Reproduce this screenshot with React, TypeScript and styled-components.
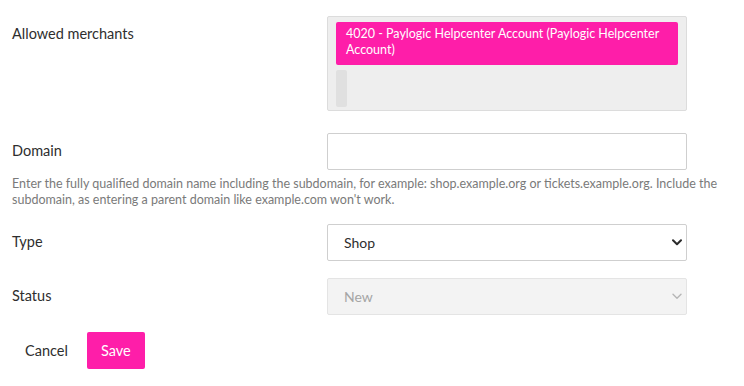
import React from "react";
import styled, { createGlobalStyle } from "styled-components";

const PINK = "#fe1ea9";
const FONT = `"Lato", "Liberation Sans", sans-serif`;

const GlobalStyle = createGlobalStyle`
  body {
    margin: 0;
    background: #ffffff;
    font-family: ${FONT};
    color: #2b2b2b;
  }
`;

const Chevron: React.FC<{ muted?: boolean }> = ({ muted }) => (
    <svg width="10" height="7" viewBox="0 0 10 7">
        <path
            d="M1 1.2 L5 5.2 L9 1.2"
            fill="none"
            stroke={muted ? "#b5b5b5" : "#2b2b2b"}
            strokeWidth={muted ? 1.4 : 2}
            strokeLinecap="round"
            strokeLinejoin="round"
        />
    </svg>
);

const App: React.FC = () => {
    return (
        <>
            <GlobalStyle />
            <Form>
                <Row>
                    <Label>Allowed merchants</Label>
                    <MerchantBox>
                        <Tag>4020 - Paylogic Helpcenter Account (Paylogic Helpcenter Account)</Tag>
                        <SearchStub />
                    </MerchantBox>
                </Row>

                <Row $gap={22}>
                    <Label>Domain</Label>
                    <TextInput type="text" />
                </Row>
                <HelpText>
                    Enter the fully qualified domain name including the subdomain, for example: shop.example.org or tickets.example.org. Include the subdomain, as entering a parent domain like example.com won't work.
                </HelpText>

                <Row $gap={16}>
                    <Label>Type</Label>
                    <SelectWrap>
                        <Select defaultValue="shop">
                            <option value="shop">Shop</option>
                        </Select>
                        <ArrowSlot><Chevron /></ArrowSlot>
                    </SelectWrap>
                </Row>

                <Row $gap={17}>
                    <Label>Status</Label>
                    <SelectWrap>
                        <Select defaultValue="new" disabled>
                            <option value="new">New</option>
                        </Select>
                        <ArrowSlot><Chevron muted /></ArrowSlot>
                    </SelectWrap>
                </Row>

                <Actions>
                    <CancelButton type="button">Cancel</CancelButton>
                    <SaveButton type="button">Save</SaveButton>
                </Actions>
            </Form>
        </>
    );
};

export default App;

const Form = styled.div`
  display: flex;
  flex-direction: column;
  width: 744px;
  padding: 16px 0 0 12px;
  box-sizing: border-box;
`;

const Row = styled.div<{ $gap?: number }>`
  display: grid;
  grid-template-columns: 315px 360px;
  align-items: start;
  margin-top: ${(p) => p.$gap ?? 0}px;
`;

const Label = styled.div`
  font-size: 14.5px;
  line-height: 35px;
  color: #2e2e2e;
`;

const MerchantBox = styled.div`
  display: flex;
  flex-direction: column;
  gap: 5px;
  height: 95px;
  box-sizing: border-box;
  padding: 5px 8px;
  background: #eeeeee;
  border: 1px solid #dcdcdc;
  border-radius: 2px;
`;

const Tag = styled.div`
  background: ${PINK};
  color: #ffffff;
  font-size: 12.5px;
  line-height: 16px;
  padding: 4px 10px 7px;
  border-radius: 2px;
`;

const SearchStub = styled.div`
  width: 11px;
  height: 37px;
  flex-shrink: 0;
  background: #e0e0e0;
  border-radius: 2px;
`;

const TextInput = styled.input`
  height: 37px;
  box-sizing: border-box;
  border: 1px solid #cfcfcf;
  border-radius: 2px;
  padding: 0 12px;
  font: inherit;
  outline: none;
`;

const HelpText = styled.p`
  margin: 6px 0 0;
  width: 720px;
  font-size: 12.5px;
  line-height: 16px;
  color: #7a7a7a;
`;

const SelectWrap = styled.div`
  position: relative;
  display: flex;
`;

const Select = styled.select`
  appearance: none;
  width: 100%;
  height: 37px;
  box-sizing: border-box;
  padding: 0 30px 0 16px;
  border: 1px solid #cfcfcf;
  border-radius: 2px;
  background: #ffffff;
  font-family: ${FONT};
  font-size: 14px;
  color: #2e2e2e;
  outline: none;

  &:disabled {
    background: #f3f3f3;
    border-color: #e4e4e4;
    color: #a5a5a5;
    opacity: 1;
  }
`;

const ArrowSlot = styled.span`
  position: absolute;
  right: 5px;
  top: 0;
  height: 100%;
  display: flex;
  align-items: center;
  pointer-events: none;
`;

const Actions = styled.div`
  display: flex;
  align-items: center;
  gap: 6px;
  margin-top: 17px;
`;

const CancelButton = styled.button`
  background: none;
  border: none;
  padding: 0 13px;
  height: 37px;
  font-family: ${FONT};
  font-size: 14.5px;
  color: #2e2e2e;
  cursor: pointer;
`;

const SaveButton = styled.button`
  background: ${PINK};
  border: none;
  border-radius: 2px;
  height: 37px;
  width: 58px;
  font-family: ${FONT};
  font-size: 14.5px;
  color: #ffffff;
  cursor: pointer;
`;
